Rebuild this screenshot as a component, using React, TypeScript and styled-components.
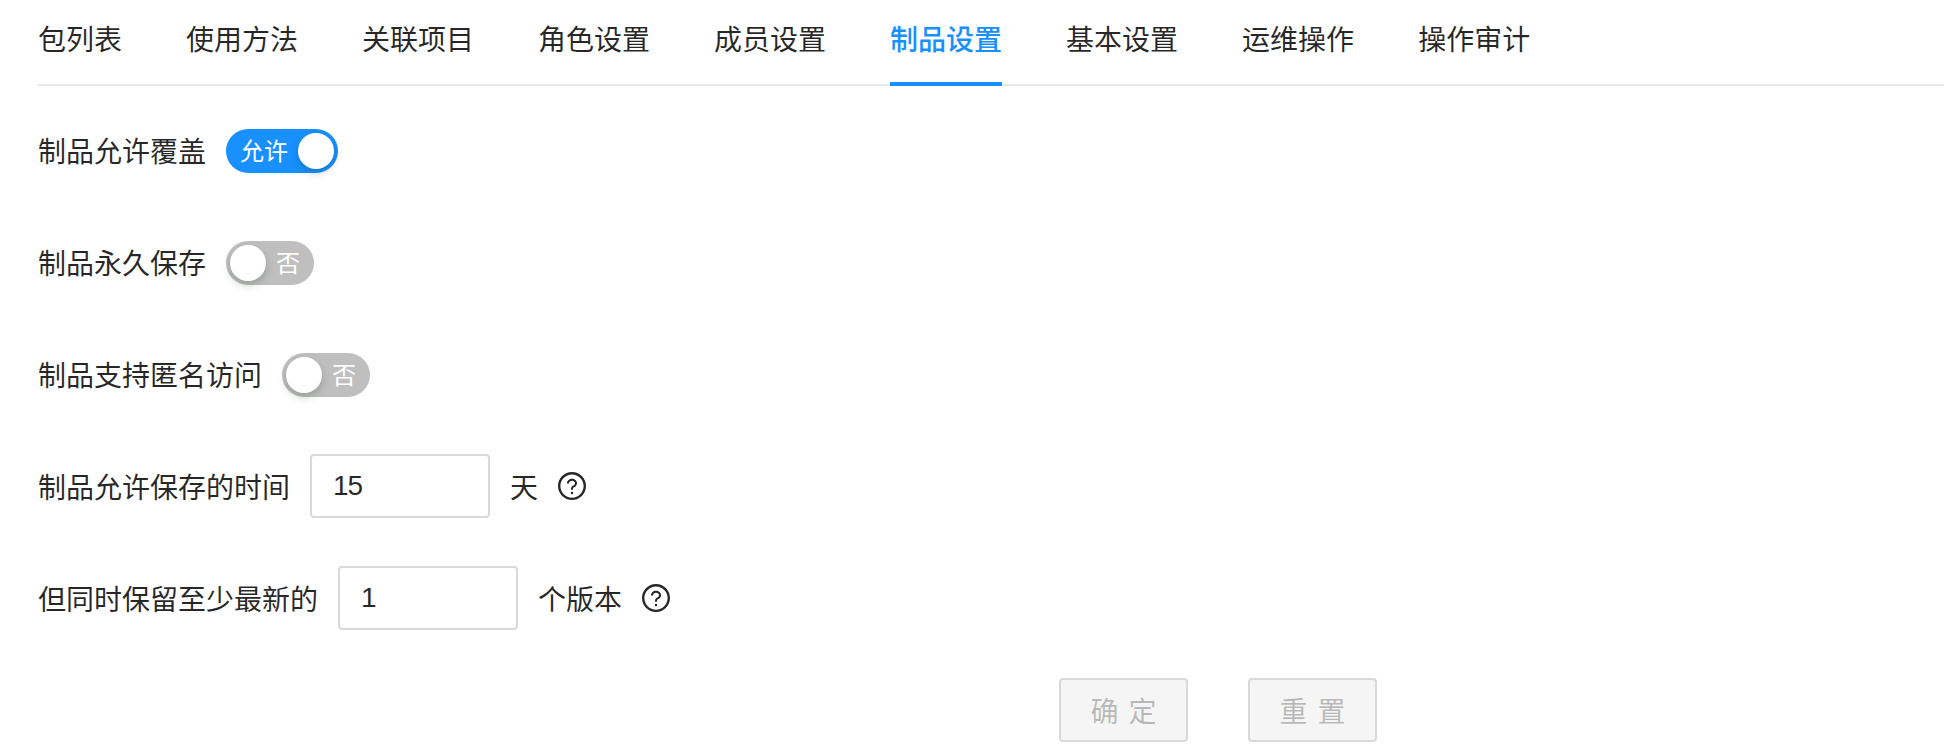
import React from "react";
import styled, { createGlobalStyle } from "styled-components";
import { AiOutlineQuestionCircle } from "react-icons/ai";

const GlobalStyle = createGlobalStyle`
  html, body {
    margin: 0;
    background: #fff;
  }

  body {
    font-family: "Liberation Sans", "Noto Sans CJK SC", sans-serif;
    font-size: 28px;
    color: rgba(0, 0, 0, 0.85);
  }
`;

const Page = styled.div`
  width: 1944px;
  height: 756px;
  box-sizing: border-box;
  padding-left: 38px;
  overflow: hidden;
`;

const TabBar = styled.nav`
  display: flex;
  gap: 64px;
  height: 86px;
  box-sizing: border-box;
  border-bottom: 2px solid #e8e8e8;
`;

const Tab = styled.div<{ $active?: boolean }>`
  height: 86px;
  box-sizing: border-box;
  padding-top: 21px;
  line-height: 40px;
  font-weight: ${({ $active }) => ($active ? 500 : 400)};
  color: ${({ $active }) => ($active ? "#1890ff" : "rgba(0, 0, 0, 0.85)")};
  border-bottom: ${({ $active }) => ($active ? "4px solid #1890ff" : "none")};
`;

const Form = styled.form`
  display: flex;
  flex-direction: column;
  gap: 48px;
  padding-top: 32px;
`;

const Row = styled.div`
  display: flex;
  align-items: center;
  height: 64px;
`;

const Label = styled.label`
  margin-right: 20px;
  white-space: nowrap;
`;

const Switch = styled.span<{ $on?: boolean }>`
  position: relative;
  display: inline-flex;
  align-items: center;
  height: 44px;
  margin-top: 2px;
  box-sizing: border-box;
  border-radius: 22px;
  background: ${({ $on }) => ($on ? "#1890ff" : "#bfbfbf")};
  color: #fff;
  font-size: 24px;
  padding: ${({ $on }) => ($on ? "0 50px 4px 14px" : "0 14px 4px 50px")};

  &::after {
    content: "";
    position: absolute;
    top: 4px;
    ${({ $on }) => ($on ? "right: 4px;" : "left: 4px;")}
    width: 36px;
    height: 36px;
    border-radius: 50%;
    background: #fff;
    box-shadow: 0 4px 8px rgba(0, 35, 11, 0.2);
  }
`;

const NumberInput = styled.input`
  width: 180px;
  height: 64px;
  box-sizing: border-box;
  padding: 0 21px;
  border: 2px solid #d9d9d9;
  border-radius: 4px;
  outline: none;
  font: inherit;
  letter-spacing: -1px;
  color: rgba(0, 0, 0, 0.85);
`;

const Unit = styled.span`
  margin-left: 20px;
`;

const HelpIcon = styled(AiOutlineQuestionCircle)`
  margin-left: 18px;
  font-size: 32px;
  color: rgba(0, 0, 0, 0.85);
`;

const Actions = styled.div`
  display: flex;
  gap: 60px;
  padding-left: 1021px;
`;

const Button = styled.button`
  width: 129px;
  height: 64px;
  box-sizing: border-box;
  padding: 0;
  border: 2px solid #d9d9d9;
  border-radius: 4px;
  background: #f5f5f5;
  font: inherit;
  letter-spacing: 10px;
  text-indent: 10px;
  color: rgba(0, 0, 0, 0.25);
`;

const tabs = [
  "包列表",
  "使用方法",
  "关联项目",
  "角色设置",
  "成员设置",
  "制品设置",
  "基本设置",
  "运维操作",
  "操作审计",
];

const App: React.FC = () => {
  return (
    <Page>
      <GlobalStyle />
      <TabBar>
        {tabs.map((tab) => (
          <Tab key={tab} $active={tab === "制品设置"}>
            {tab}
          </Tab>
        ))}
      </TabBar>
      <Form>
        <Row>
          <Label>制品允许覆盖</Label>
          <Switch $on>允许</Switch>
        </Row>
        <Row>
          <Label>制品永久保存</Label>
          <Switch>否</Switch>
        </Row>
        <Row>
          <Label>制品支持匿名访问</Label>
          <Switch>否</Switch>
        </Row>
        <Row>
          <Label>制品允许保存的时间</Label>
          <NumberInput defaultValue="15" />
          <Unit>天</Unit>
          <HelpIcon />
        </Row>
        <Row>
          <Label>但同时保留至少最新的</Label>
          <NumberInput defaultValue="1" />
          <Unit>个版本</Unit>
          <HelpIcon />
        </Row>
        <Actions>
          <Button type="button" disabled>
            确定
          </Button>
          <Button type="button" disabled>
            重置
          </Button>
        </Actions>
      </Form>
    </Page>
  );
};

export default App;
